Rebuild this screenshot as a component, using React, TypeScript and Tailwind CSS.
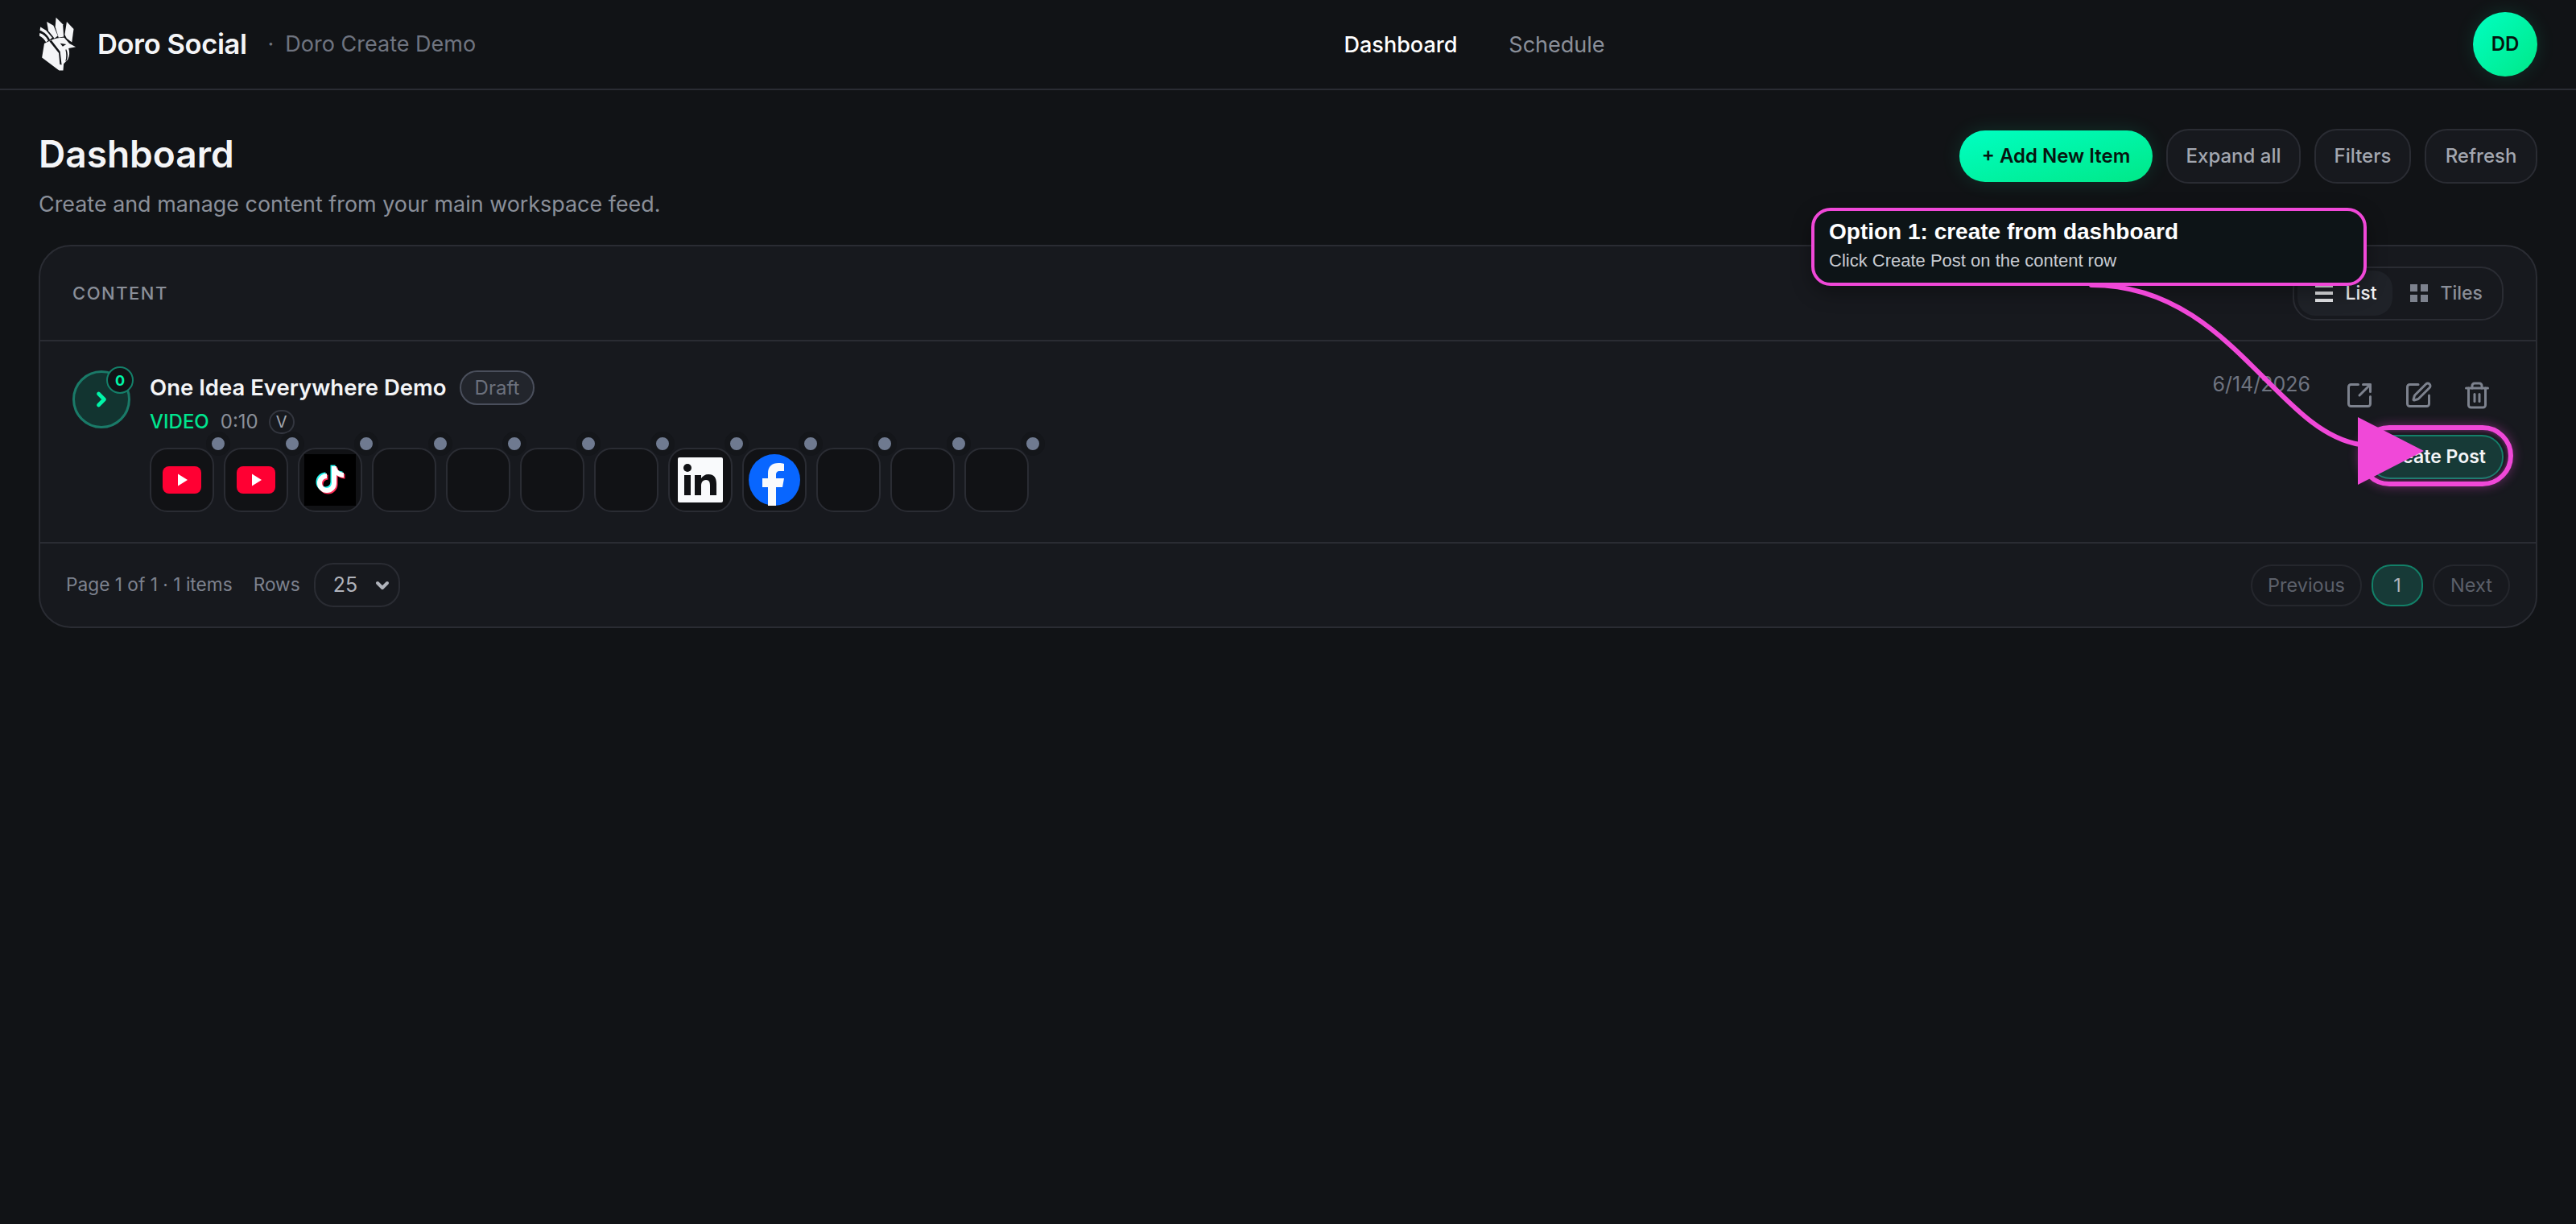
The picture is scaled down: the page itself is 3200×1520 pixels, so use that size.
import { ChevronDown, ChevronRight, SquareArrowOutUpRight, SquarePen, Trash2 } from 'lucide-react'

const channels = ['youtube', 'youtube', 'tiktok', '', '', '', '', 'linkedin', 'facebook', '', '', '']

function RoosterLogo() {
  return (
    <svg width="47" height="70" viewBox="50 32 148 212" fill="#f4f5f7">
      <path d="M118 33l27 27 3 48-20 4-13-42z" />
      <path d="M160 50l27 28-7 52-20-15-8-15z" />
      <path d="M82 50l26 15 17 40-13 10-24-30z" />
      <path d="M57 70l22 14 24 28-9 8C86 104 72 90 55 84z" />
      <path d="M54 94c14 4 25 13 33 29l-8 7c-6-11-15-20-26-25z" />
      <path d="M98 122c18-8 36-11 52-10l20 23 25 13-28 6c5 14 4 30-3 44l-16 16-2 26-16 0-67-50 9-55z" />
      <path d="M134 134l24 4-14 9z" fill="#111316" />
      <path d="M100 122l34 44 6 52-7-1-4-44-37-47z" fill="#111316" />
      <path d="M158 158c6 12 7 28 2 42l-5 5c4-16 4-32 0-46z" fill="#111316" />
    </svg>
  )
}

function YoutubeIcon() {
  return (
    <svg width="48" height="34" viewBox="0 0 48 34">
      <rect width="48" height="34" rx="8" fill="#ff0033" />
      <path d="M19 9.5L31 17 19 24.5z" fill="#fff" />
    </svg>
  )
}

function TiktokIcon() {
  const note =
    'M34 15v21a6 6 0 1 1-6-6v-6a12 12 0 1 0 12 12V26c3 2 6 3 9 3v-6c-5 0-9-4-9-8z'
  return (
    <svg width="64" height="64" viewBox="0 0 64 64">
      <rect width="64" height="64" fill="#000" />
      <path d={note} fill="#25f4ee" transform="translate(-1.5 -1.5)" />
      <path d={note} fill="#fe2c55" transform="translate(1.5 1.5)" />
      <path d={note} fill="#fff" />
    </svg>
  )
}

function LinkedinIcon() {
  return (
    <svg width="56" height="56" viewBox="0 0 56 56">
      <rect width="56" height="56" rx="2" fill="#f9fafc" />
      <circle cx="12" cy="13" r="5" fill="#111215" />
      <path d="M8 22h8v25H8zM21 22h8v4c2-3 5-5 9-5 7 0 10 4 10 12v14h-8V35c0-4-1-7-5-7s-6 3-6 7v12h-8z" fill="#111215" />
    </svg>
  )
}

function FacebookIcon() {
  return (
    <svg width="64" height="64" viewBox="0 0 64 64">
      <circle cx="32" cy="32" r="32" fill="#0866ff" />
      <path d="M24 64V41h-7V30h7v-6c0-9 5-13 13-13 3 0 5 0 7 1v9h-5c-4 0-5 2-5 5v4h10l-2 11h-8v23c-3 .5-7 .5-10 0z" fill="#f9fafc" />
    </svg>
  )
}

function ChannelIcon({ name }: { name: string }) {
  if (name === 'youtube') return <YoutubeIcon />
  if (name === 'tiktok') return <TiktokIcon />
  if (name === 'linkedin') return <LinkedinIcon />
  if (name === 'facebook') return <FacebookIcon />
  return null
}

function ArrowOverlay() {
  return (
    <svg className="absolute left-0 top-0 pointer-events-none" width="3200" height="1520" viewBox="0 0 3200 1520" fill="none">
      <path
        d="M2598 354C2770 354 2827 536 2932 552"
        stroke="#f048d8"
        strokeWidth="6"
        strokeLinecap="round"
      />
      <path d="M2929 518L3011 560L2929 602z" fill="#f048d8" />
    </svg>
  )
}

export default function App() {
  return (
    <div className="relative min-h-screen bg-[#111316] font-['Inter',sans-serif] text-white overflow-hidden">
      <header className="flex items-center justify-between h-[112px] px-12 border-b-2 border-[#2a2c33]">
        <div className="flex items-center">
          <RoosterLogo />
          <span className="ml-[26px] text-[34.5px] font-semibold tracking-[-0.4px] text-[#f4f5f7]">Doro Social</span>
          <span className="ml-[26px] text-[27px] text-[#6f7480]">·</span>
          <span className="ml-[14px] text-[27px] text-[#6f7480]">Doro Create Demo</span>
        </div>
        <nav className="flex items-center gap-[64px] mt-[2px] text-[27px]">
          <span className="text-white font-medium">Dashboard</span>
          <span className="text-[#8a8f99]">Schedule</span>
        </nav>
        <div className="flex items-center justify-center w-20 h-20 rounded-full bg-gradient-to-br from-[#00ffc2] to-[#00e887] text-[24px] font-semibold text-[#06140f] shadow-[0_0_24px_rgba(0,255,170,0.12)]">
          DD
        </div>
      </header>

      <main className="px-12">
        <div className="flex items-start justify-between pt-12">
          <div>
            <h1 className="mt-[3px] text-[46px] leading-[56px] font-semibold text-[#f4f5f7]">Dashboard</h1>
            <p className="mt-4 text-[26.9px] leading-9 text-[#8a8f99]">Create and manage content from your main workspace feed.</p>
          </div>
          <div className="flex items-center gap-[17px] text-[24px] font-medium">
            <button className="h-16 w-[240px] rounded-[32px] bg-gradient-to-br from-[#00ffc2] to-[#00e887] font-semibold text-[#06140f] shadow-[0_0_24px_rgba(0,255,170,0.12)]">
              + Add New Item
            </button>
            <button className="h-[68px] w-[167px] rounded-[28px] border-2 border-[#2a2c33] bg-[#17191e] text-[#a3a7b0]">Expand all</button>
            <button className="h-[68px] w-[120px] rounded-[28px] border-2 border-[#2a2c33] bg-[#17191e] text-[#a3a7b0]">Filters</button>
            <button className="h-[68px] w-[140px] rounded-[28px] border-2 border-[#2a2c33] bg-[#17191e] text-[#a3a7b0]">Refresh</button>
          </div>
        </div>

        <section className="mt-[33px] rounded-[40px] border-2 border-[#2a2c33] bg-[#17191e]">
          <div className="flex items-center justify-between h-[118px] pl-10 pr-10 border-b-2 border-[#2a2c33]">
            <span className="text-[22px] font-medium tracking-[1.5px] text-[#8a8f99]">CONTENT</span>
            <div className="flex items-center h-[67px] p-1 rounded-[28px] border-2 border-[#2a2c33] text-[23px] font-medium">
              <div className="flex items-center h-14 pl-[22px] pr-5 gap-[15px] rounded-[22px] bg-[#1f2228] text-[#f4f5f7]">
                <span className="flex flex-col gap-[5px]">
                  <span className="block w-[22px] h-1 bg-[#e4e5e8]" />
                  <span className="block w-[22px] h-1 bg-[#e4e5e8]" />
                  <span className="block w-[22px] h-1 bg-[#e4e5e8]" />
                </span>
                List
              </div>
              <div className="flex items-center h-14 pl-[22px] pr-5 gap-[15px] text-[#8a8f99]">
                <span className="grid grid-cols-2 gap-1">
                  <span className="block w-[9px] h-[9px] bg-[#7d828e]" />
                  <span className="block w-[9px] h-[9px] bg-[#7d828e]" />
                  <span className="block w-[9px] h-[9px] bg-[#7d828e]" />
                  <span className="block w-[9px] h-[9px] bg-[#7d828e]" />
                </span>
                Tiles
              </div>
            </div>
          </div>

          <div className="flex justify-between px-10 pt-9 pb-[37px] border-b-2 border-[#2a2c33]">
            <div className="flex">
              <div className="relative flex items-center justify-center w-[72px] h-[72px] rounded-full border-[3px] border-[#1a7a68] bg-[#123430]">
                <ChevronRight size={28} strokeWidth={4} className="text-[#00f5a8]" />
                <span className="absolute -top-[8px] -right-[7px] flex items-center justify-center w-[34px] h-[34px] rounded-full border-2 border-[#14806a] bg-[#111316] text-[18px] font-bold text-[#00f5a8]">
                  0
                </span>
              </div>
              <div className="ml-6">
                <div className="flex items-center h-[43px] gap-4">
                  <span className="text-[27.5px] font-semibold text-[#f4f5f7]">One Idea Everywhere Demo</span>
                  <span className="flex items-center h-[43px] px-[17px] rounded-[22px] border-2 border-[#4a4f5c] bg-[#22252c] text-[24px] text-[#6c717d]">
                    Draft
                  </span>
                </div>
                <div className="flex items-center mt-[6px] h-[30px] text-[24px]">
                  <span className="font-medium text-[#00e58f]">VIDEO</span>
                  <span className="ml-[14px] text-[#8a8f99]">0:10</span>
                  <span className="ml-[13px] flex items-center justify-center w-8 h-[30px] rounded-full border-2 border-[#33363f] text-[20px] text-[#a3a7b0]">
                    V
                  </span>
                </div>
                <div className="flex mt-[17px] gap-3">
                  {channels.map((name, i) => (
                    <div
                      key={i}
                      className="relative flex items-center justify-center w-20 h-20 rounded-[22px] border-2 border-[#2a2c33] bg-[#111215]"
                    >
                      <ChannelIcon name={name} />
                      <span className="absolute -top-[22px] -right-[22px] w-[30px] h-[30px] rounded-full border-[7px] border-[#14161a] bg-[#6f7a90]" />
                    </div>
                  ))}
                </div>
              </div>
            </div>

            <div className="flex flex-col items-end -mt-[6px]">
              <div className="flex items-start">
                <span className="mt-[5px] mr-7 text-[25px] leading-9 text-[#6f7480]">6/14/2026</span>
                <div className="flex mt-[9px] gap-[7px] text-[#7d828e]">
                  <button className="flex items-center justify-center w-[66px] h-14">
                    <SquareArrowOutUpRight size={36} strokeWidth={2} />
                  </button>
                  <button className="flex items-center justify-center w-[66px] h-14">
                    <SquarePen size={36} strokeWidth={2} />
                  </button>
                  <button className="flex items-center justify-center w-[66px] h-14">
                    <Trash2 size={36} strokeWidth={2} />
                  </button>
                </div>
              </div>
              <button className="relative flex items-center justify-end mt-[21px] w-[168px] h-[55px] pr-5 rounded-[27px] border-2 border-[#14806a] bg-[#173a37] text-[23px] font-semibold text-[#f4f5f7]">
                Create Post
                <span className="absolute -top-[14px] -bottom-[11px] -left-[14px] -right-[14px] rounded-[38px] border-[6px] border-[#f048d8] shadow-[0_0_14px_rgba(240,72,216,0.4),inset_0_0_6px_rgba(240,72,216,0.5)]" />
              </button>
            </div>
          </div>

          <div className="flex items-center justify-between h-[103px] px-8">
            <div className="flex items-center text-[22.7px] text-[#7d828e]">
              <span>Page 1 of 1 · 1 items</span>
              <span className="ml-[26px]">Rows</span>
              <div className="ml-[17px] flex items-center justify-between w-[107px] h-[55px] pl-[22px] pr-2 rounded-[24px] border-2 border-[#2a2c33] text-[25px] text-[#b0b3bb]">
                25
                <ChevronDown size={24} strokeWidth={4} />
              </div>
            </div>
            <div className="flex items-center gap-3 text-[23.5px] text-[#5c606a]">
              <span className="flex items-center justify-center w-[138px] h-[52px] rounded-[26px] border-2 border-[#25272d]">Previous</span>
              <span className="flex items-center justify-center w-16 h-[52px] rounded-[24px] border-2 border-[#128068] bg-[#173a37] text-[#b0b3bb]">1</span>
              <span className="flex items-center justify-center w-24 h-[52px] rounded-[26px] border-2 border-[#25272d]">Next</span>
            </div>
          </div>
        </section>
      </main>

      <div className="absolute left-[2250px] top-[258px] flex flex-col w-[690px] h-[97px] px-[18px] pt-[9px] rounded-[24px] border-4 border-[#f048d8] bg-[#0d1417] font-['Liberation_Sans',sans-serif] shadow-[0_8px_24px_rgba(0,0,0,0.35)]">
        <span className="text-[28px] leading-[34px] font-bold text-white">Option 1: create from dashboard</span>
        <span className="mt-[5px] text-[22px] leading-[28px] text-[#c9ccd2]">Click Create Post on the content row</span>
      </div>
      <ArrowOverlay />
    </div>
  )
}
